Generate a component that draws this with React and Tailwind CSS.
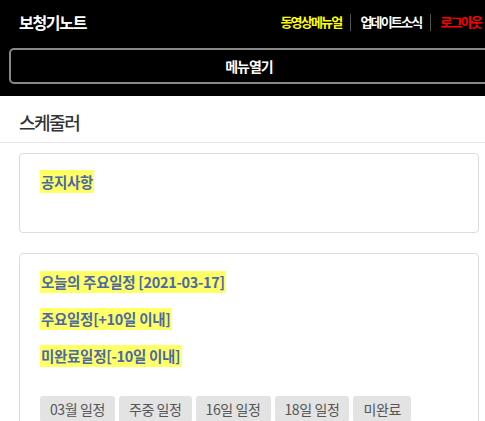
// App.jsx

const font = { fontFamily: '"Noto Sans CJK KR", "Noto Sans", sans-serif' };

const Mark = ({ children }) => (
  <span className="bg-[#ffff66] text-[#4a69a6] font-bold text-[14.5px] leading-[20px] tracking-[-0.3px] px-[1px] py-[1px]">{children}</span>
);

const Chip = ({ label }) => (
  <button className="bg-[#e3e3e3] text-[#555] text-[14px] tracking-[-0.4px] rounded-[3px] px-[10px] h-[26px] leading-[26px] whitespace-nowrap">
    {label}
  </button>
);

export default function App() {
  return (
    <div className="w-[485px] h-[421px] overflow-hidden bg-white" style={font}>
      <header className="bg-black h-[96px] pt-[11px]">
        <div className="flex items-center justify-between pl-[19px] pr-[4px] h-[22px]">
          <h1 className="text-white font-bold text-[16px] tracking-[-1.3px]">보청기노트</h1>
          <nav className="flex items-center text-[13px] font-bold tracking-[-1.8px] whitespace-nowrap">
            <a className="text-[#ffff00]">동영상메뉴얼</a>
            <span className="w-px h-[17px] bg-[#555] mx-[9px]"></span>
            <a className="text-white">업데이트소식</a>
            <span className="w-px h-[17px] bg-[#555] mx-[9px]"></span>
            <a className="text-[#ff0000]">로그아웃</a>
          </nav>
        </div>
        <div className="pl-[9px] mt-[15px]">
          <button className="w-[480px] h-[36px] border-2 border-[#888] rounded-[5px] text-white font-bold text-[14px] tracking-[-1px]">
            메뉴열기
          </button>
        </div>
      </header>

      <div className="h-[47px] border-b border-[#e5e5e5] pl-[19px] pt-[6px] flex items-center">
        <h2 className="text-[#333] text-[18px] tracking-[-1.5px] font-medium">스케줄러</h2>
      </div>

      <div className="px-[19px] pr-[6px] pt-[10px] flex flex-col gap-[20px]">
        <section className="h-[80px] border border-[#ddd] rounded-[4px] pl-[20px] pt-[15px]">
          <Mark>공지사항</Mark>
        </section>

        <section className="border border-[#ddd] rounded-[4px] pl-[20px] pt-[17px] pb-[20px]">
          <div className="flex flex-col items-start gap-[15px]">
            <Mark>오늘의 주요일정 [2021-03-17]</Mark>
            <Mark>주요일정[+10일 이내]</Mark>
            <Mark>미완료일정[-10일 이내]</Mark>
          </div>
          <div className="flex gap-[4px] mt-[29px]">
            <Chip label="03월 일정" />
            <Chip label="주중 일정" />
            <Chip label="16일 일정" />
            <Chip label="18일 일정" />
            <Chip label="미완료" />
          </div>
        </section>
      </div>
    </div>
  );
}
